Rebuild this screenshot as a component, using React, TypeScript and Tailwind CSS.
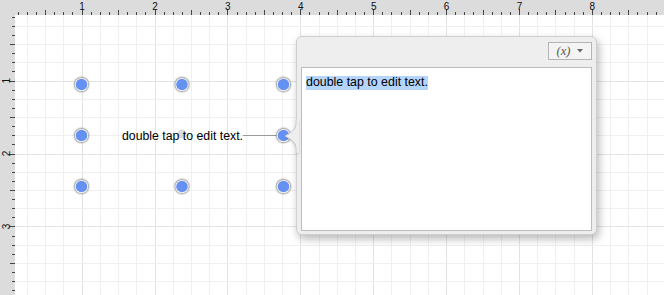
import React from 'react';

// --- canvas geometry (page coords) ---
const INCH = 72.9;
const X0 = 8.7;
const Y0 = 7.7;
const W = 664;
const H = 295;

const dots: [number, number][] = [
    [81.5, 84.5], [182, 84.5], [283.5, 84.5],
    [81.5, 135.5], [283.5, 135.5],
    [81.5, 186.5], [182, 186.5], [283.5, 186.5],
];

const Dot: React.FC<{ x: number; y: number }> = ({ x, y }) => (
    <g>
        <circle cx={x} cy={y} r={9} fill="#000" opacity={0.05} />
        <circle cx={x} cy={y} r={8} fill="#000" opacity={0.12} />
        <circle cx={x} cy={y} r={7.3} fill="#a8a8a8" />
        <circle cx={x} cy={y} r={6.6} fill="#fff" />
        <circle cx={x} cy={y} r={5.8} fill="#6491f2" />
    </g>
);

const TopRuler: React.FC = () => {
    const ticks = [];
    for (let i = 0; i * INCH / 8 + X0 < W; i++) {
        const x = Math.round(X0 + i * INCH / 8) + 0.5;
        if (x < 15) continue;
        const len = i % 8 === 0 ? 6 : i % 4 === 0 ? 5 : 3;
        ticks.push(<line key={i} x1={x} x2={x} y1={15 - len} y2={15} stroke="#444" strokeWidth={1} />);
    }
    const labels = [1, 2, 3, 4, 5, 6, 7, 8].map(n => (
        <text key={n} x={X0 + n * INCH + 0.5} y={10} fontSize={10} textAnchor="middle" fill="#111"
            fontFamily='"Liberation Sans", Arial, sans-serif'>{n}</text>
    ));
    return (
        <svg width={W} height={15} className="block">
            {ticks}
            {labels}
        </svg>
    );
};

const LeftRuler: React.FC = () => {
    const ticks = [];
    for (let i = 0; i * INCH / 8 + Y0 < H; i++) {
        const y = Math.round(Y0 + i * INCH / 8) + 0.5;
        if (y < 15) continue;
        const len = i % 8 === 0 ? 6 : i % 4 === 0 ? 5 : 3;
        ticks.push(<line key={i} x1={15 - len} x2={15} y1={y - 15} y2={y - 15} stroke="#444" strokeWidth={1} />);
    }
    const labels = [1, 2, 3].map(n => {
        const y = Y0 + n * INCH - 15;
        return (
            <text key={n} x={0} y={0} fontSize={10} textAnchor="middle" fill="#111"
                transform={`translate(10 ${y}) rotate(-90)`}
                fontFamily='"Liberation Sans", Arial, sans-serif'>{n}</text>
        );
    });
    return (
        <svg width={15} height={H - 15} className="block">
            {ticks}
            {labels}
        </svg>
    );
};

const Grid: React.FC = () => {
    const lines = [];
    for (let i = 0; X0 + i * INCH / 4 < W; i++) {
        const x = Math.round(X0 + i * INCH / 4) + 0.5;
        if (x < 15) continue;
        lines.push(<line key={'v' + i} x1={x} x2={x} y1={15} y2={H} stroke={i % 4 === 0 ? '#e3e3e3' : '#f0f0f0'} />);
    }
    for (let i = 0; Y0 + i * INCH / 4 < H; i++) {
        const y = Math.round(Y0 + i * INCH / 4) + 0.5;
        if (y < 15) continue;
        lines.push(<line key={'h' + i} x1={15} x2={W} y1={y} y2={y} stroke={i % 4 === 0 ? '#e3e3e3' : '#f0f0f0'} />);
    }
    return <g>{lines}</g>;
};

const Popover: React.FC = () => (
    <div className="absolute left-[296px] top-[36px] w-[301px] h-[199px]">
        <div className="w-full h-full rounded-[6px] bg-[#eeeeee] border border-[#cfcfcf] shadow-[2px_4px_9px_rgba(0,0,0,0.28)] flex flex-col px-[4px] pt-[5px] pb-[3px]">
            <div className="flex justify-end">
                <button className="w-[44px] h-[18px] border border-[#b5b5b5] bg-[#f4f4f4] flex items-center justify-center gap-[7px] text-[#555]">
                    <span className="italic text-[12.5px] leading-none font-['Liberation_Serif',serif]">(x)</span>
                    <svg width={6} height={4} className="block"><path d="M0 0 L6 0 L3 3.5 Z" fill="#666" /></svg>
                </button>
            </div>
            <div className="mt-[7px] flex-1 bg-white border border-[#bcbcbc] pl-[4px]">
                <span className="bg-[#b5d5fd] text-[12.4px] leading-[13.5px] text-black font-['Liberation_Sans',Arial,sans-serif] inline-block">double tap to edit text.</span>
            </div>
        </div>
        {/* arrow toward the selected point */}
        <svg width={15} height={34} className="absolute left-[-12px] top-[83px] drop-shadow-[0_1px_1px_rgba(0,0,0,0.18)]">
            <path d="M13 0 C13 9 10 12 1 17 C10 22 13 25 13 34" fill="#eeeeee" stroke="#c8c8c8" strokeWidth={1} />
            <rect x={12.5} y={0} width={2.5} height={34} fill="#eeeeee" />
        </svg>
    </div>
);

const App: React.FC = () => {
    return (
        <div className="relative w-[664px] h-[295px] overflow-hidden bg-white">
            <div className="h-[15px] bg-[#dcdcdc]">
                <TopRuler />
            </div>
            <div className="flex h-[280px]">
                <div className="w-[15px] bg-[#dcdcdc]">
                    <LeftRuler />
                </div>
                <div className="flex-1 bg-white">
                    <svg width={649} height={280} viewBox="15 15 649 280" className="block">
                        <Grid />
                        <circle cx={182} cy={134} r={4.5} fill="#c4c4c4" opacity={0.6} />
                        <line x1={243} x2={280} y1={135.5} y2={135.5} stroke="#9a9a9a" strokeWidth={1} />
                        <text x={122} y={140} fontSize={12.3} fill="#000" fontFamily='"Liberation Sans", Arial, sans-serif'>double tap to edit text.</text>
                        {dots.map(([x, y], i) => <Dot key={i} x={x} y={y} />)}
                    </svg>
                </div>
            </div>
            <Popover />
        </div>
    );
};

export default App;
